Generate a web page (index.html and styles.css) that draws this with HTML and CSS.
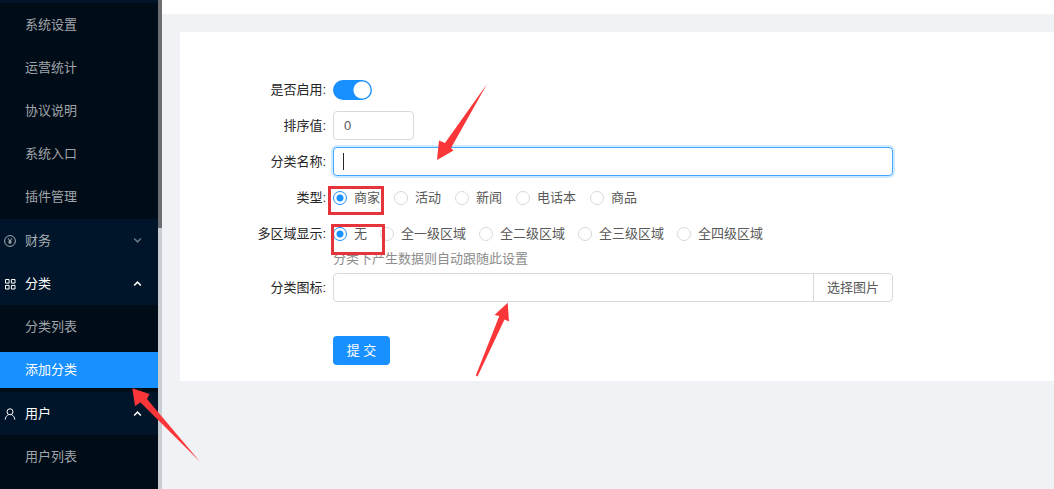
FILE: index.html
```html
<!DOCTYPE html>
<html lang="zh-CN">
<head>
<meta charset="utf-8">
<title>添加分类</title>
<link rel="stylesheet" href="styles.css">
</head>
<body>
<div class="layout">
  <nav class="sidebar">
    <div class="menu">
      <div class="submenu">
        <a class="item" href="#">系统设置</a>
        <a class="item" href="#">运营统计</a>
        <a class="item" href="#">协议说明</a>
        <a class="item" href="#">系统入口</a>
        <a class="item" href="#">插件管理</a>
      </div>
      <button class="group" type="button">
        <svg class="icon" viewBox="0 0 12 12"><circle cx="6" cy="6" r="5.4"/><path d="M4 3.2 6 6l2-2.800M6 6v3M4.400 6.200h3.200M4.400 7.700h3.200"/></svg>
        <span>财务</span>
        <svg class="chevron" viewBox="0 0 8 8"><path d="M1 2.200 4 5.200 7 2.200"/></svg>
      </button>
      <button class="group open" type="button">
        <svg class="icon" viewBox="0 0 12 12"><path d="M1.500 1.500h3.600v3.600H1.500zM7.400 1.500H11v3.600H7.400zM1.500 7.400h3.600V11H1.500zM7.400 7.400H11V11H7.400z"/></svg>
        <span>分类</span>
        <svg class="chevron" viewBox="0 0 8 8"><path d="M1 5.800 4 2.800 7 5.800"/></svg>
      </button>
      <div class="submenu">
        <a class="item" href="#">分类列表</a>
        <a class="item active" href="#">添加分类</a>
      </div>
      <button class="group open" type="button">
        <svg class="icon" viewBox="0 0 12 12"><circle cx="6" cy="3.800" r="3"/><path d="M1.200 11.600C1.400 9 3 7.400 4.600 6.600M10.800 11.600C10.600 9 9 7.400 7.400 6.600"/></svg>
        <span>用户</span>
        <svg class="chevron" viewBox="0 0 8 8"><path d="M1 5.800 4 2.800 7 5.800"/></svg>
      </button>
      <div class="submenu last">
        <a class="item" href="#">用户列表</a>
      </div>
    </div>
    <div class="track"><div class="thumb"></div></div>
  </nav>

  <div class="content">
    <header class="topbar"></header>
    <main class="main">
      <form class="card">
        <div class="row">
          <label class="label" for="enabled">是否启用:</label>
          <div class="control"><input class="switch" id="enabled" type="checkbox" role="switch" checked></div>
        </div>
        <div class="row">
          <label class="label" for="sort">排序值:</label>
          <div class="control"><input class="text short" id="sort" type="text" value="0"></div>
        </div>
        <div class="row">
          <label class="label" for="name">分类名称:</label>
          <div class="control"><input class="text focused" id="name" type="text"><span class="caret"></span></div>
        </div>
        <div class="row" role="radiogroup" aria-labelledby="type-label">
          <span class="label" id="type-label">类型:</span>
          <div class="control options">
            <label class="option"><input type="radio" name="type" checked>商家</label>
            <label class="option"><input type="radio" name="type">活动</label>
            <label class="option"><input type="radio" name="type">新闻</label>
            <label class="option"><input type="radio" name="type">电话本</label>
            <label class="option"><input type="radio" name="type">商品</label>
          </div>
        </div>
        <div class="row with-help" role="radiogroup" aria-labelledby="region-label">
          <span class="label" id="region-label">多区域显示:</span>
          <div class="field">
            <div class="control options tight">
              <label class="option"><input type="radio" name="region" checked>无</label>
              <label class="option"><input type="radio" name="region">全一级区域</label>
              <label class="option"><input type="radio" name="region">全二级区域</label>
              <label class="option"><input type="radio" name="region">全三级区域</label>
              <label class="option"><input type="radio" name="region">全四级区域</label>
            </div>
            <div class="help">分类下产生数据则自动跟随此设置</div>
          </div>
        </div>
        <div class="row">
          <label class="label" for="image">分类图标:</label>
          <div class="control"><input class="text joined" id="image" type="text"><button class="pick" type="button">选择图片</button></div>
        </div>
        <div class="row actions">
          <span class="label"></span>
          <button class="submit" type="button">提 交</button>
        </div>
      </form>
    </main>
  </div>
</div>

<svg class="marks" viewBox="0 0 1054 489" aria-hidden="true">
  <rect x="329.500" y="187.500" width="53" height="26"/>
  <rect x="332.500" y="225.500" width="51" height="28"/>
  <path d="M437 160 439 140.500 445 143 487 84 451 148 453.500 150.500z"/>
  <path d="M507.700 302.700 494.500 315 499.300 316 475.800 375.500 477.500 376.500 504.500 319.500 509 321.500z"/>
  <path d="M132.300 388.300 149.500 394 147 399 200 461.700 140.500 402.500 135 406z"/>
</svg>
</body>
</html>
```
FILE: styles.css
```css
* {
  box-sizing: border-box;
}

body {
  margin: 0;
  background: #f0f2f5;
  color: #595959;
  font: 13px/20px "Liberation Sans", "Noto Sans CJK SC", sans-serif;
  overflow: hidden;
}

button,
input {
  font: inherit;
  margin: 0;
}

.layout {
  display: flex;
  height: 100vh;
}

/* Sidebar */
.sidebar {
  display: flex;
  flex: none;
  width: 162px;
  background: #001529;
}

.menu {
  display: flex;
  flex: 1;
  flex-direction: column;
  padding-top: 3px;
  overflow: hidden;
}

.submenu {
  display: flex;
  flex: none;
  flex-direction: column;
  gap: 7px;
  padding: 4px 0;
  background: #000c17;
}

.submenu.last {
  flex: 1 0 auto;
}

.item {
  padding: 8px 0 8px 25px;
  color: #a0a5aa;
  text-decoration: none;
}

.item.active {
  background: #1890ff;
  color: #fff;
}

.group {
  display: flex;
  flex: none;
  align-items: center;
  gap: 9px;
  height: 43px;
  padding: 0 16px 0 4px;
  border: 0;
  background: none;
  color: #a6adb4;
  text-align: left;
}

.group.open {
  color: #fff;
}

.group svg {
  fill: none;
  stroke: currentColor;
}

.icon {
  width: 12px;
  height: 12px;
}

.chevron {
  width: 9px;
  height: 9px;
  margin-left: auto;
  stroke-width: 1.3;
}

.group:not(.open) .chevron {
  color: #6b7783;
}

.track {
  width: 4px;
  background: #c9ccd0;
}

.thumb {
  height: 228px;
  background: #6c6e71;
}

/* Page */
.content {
  flex: 1;
  min-width: 0;
}

.topbar {
  height: 14px;
  background: #fff;
}

.main {
  padding: 18px 0 0 18px;
}

.card {
  padding: 40px 0 12px;
  background: #fff;
}

.row {
  display: flex;
  padding: 3px 0 4px;
}

.row.with-help {
  padding-bottom: 0;
}

.label {
  flex: none;
  width: 153px;
  padding-right: 7px;
  color: #262626;
  line-height: 29px;
  text-align: right;
}

.field {
  flex: 1;
}

.control {
  position: relative;
  display: flex;
  flex: 1;
  align-items: center;
  min-height: 29px;
  max-width: 560px;
}

.switch {
  width: 39px;
  height: 20px;
  border-radius: 10px;
  appearance: none;
  background: radial-gradient(circle at 29px 10px, #fff 8px, #1890ff 9px);
}

.text {
  flex: 1;
  min-width: 0;
  height: 29px;
  padding: 0 10px;
  border: 1px solid #d9d9d9;
  border-radius: 4px;
  outline: 0;
  background: #fff;
  color: #595959;
}

.text.short {
  flex: none;
  width: 81px;
}

.text.focused {
  border-color: #40a9ff;
  box-shadow: 0 0 0 2px rgba(24, 144, 255, 0.2);
}

.caret {
  position: absolute;
  top: 6px;
  left: 10px;
  width: 1px;
  height: 17px;
  background: #262626;
}

.text.joined {
  border-radius: 4px 0 0 4px;
}

.pick {
  height: 29px;
  margin-left: -1px;
  padding: 0 13px;
  border: 1px solid #d9d9d9;
  border-radius: 0 4px 4px 0;
  background: #fff;
  color: #595959;
}

.options {
  gap: 14px;
}

.options.tight {
  gap: 13px;
}

.option {
  display: flex;
  align-items: center;
  gap: 7px;
  white-space: nowrap;
}

.option input {
  width: 14px;
  height: 14px;
  border: 1px solid #d9d9d9;
  border-radius: 50%;
  appearance: none;
  background: #fff;
}

.option input:checked {
  border-color: #1890ff;
  background: radial-gradient(circle, #1890ff 3px, #fff 4px);
}

.help {
  color: #8c8c8c;
  line-height: 22px;
}

.actions {
  padding-top: 30px;
}

.submit {
  width: 57px;
  height: 29px;
  padding: 0;
  border: 0;
  border-radius: 4px;
  background: #1890ff;
  color: #fff;
}

/* Annotations drawn over the page */
.marks {
  position: absolute;
  top: 0;
  left: 0;
  width: 1054px;
  height: 489px;
  pointer-events: none;
}

.marks rect {
  fill: none;
  stroke: #e6353a;
  stroke-width: 3;
}

.marks path {
  fill: #fb3638;
}
```
